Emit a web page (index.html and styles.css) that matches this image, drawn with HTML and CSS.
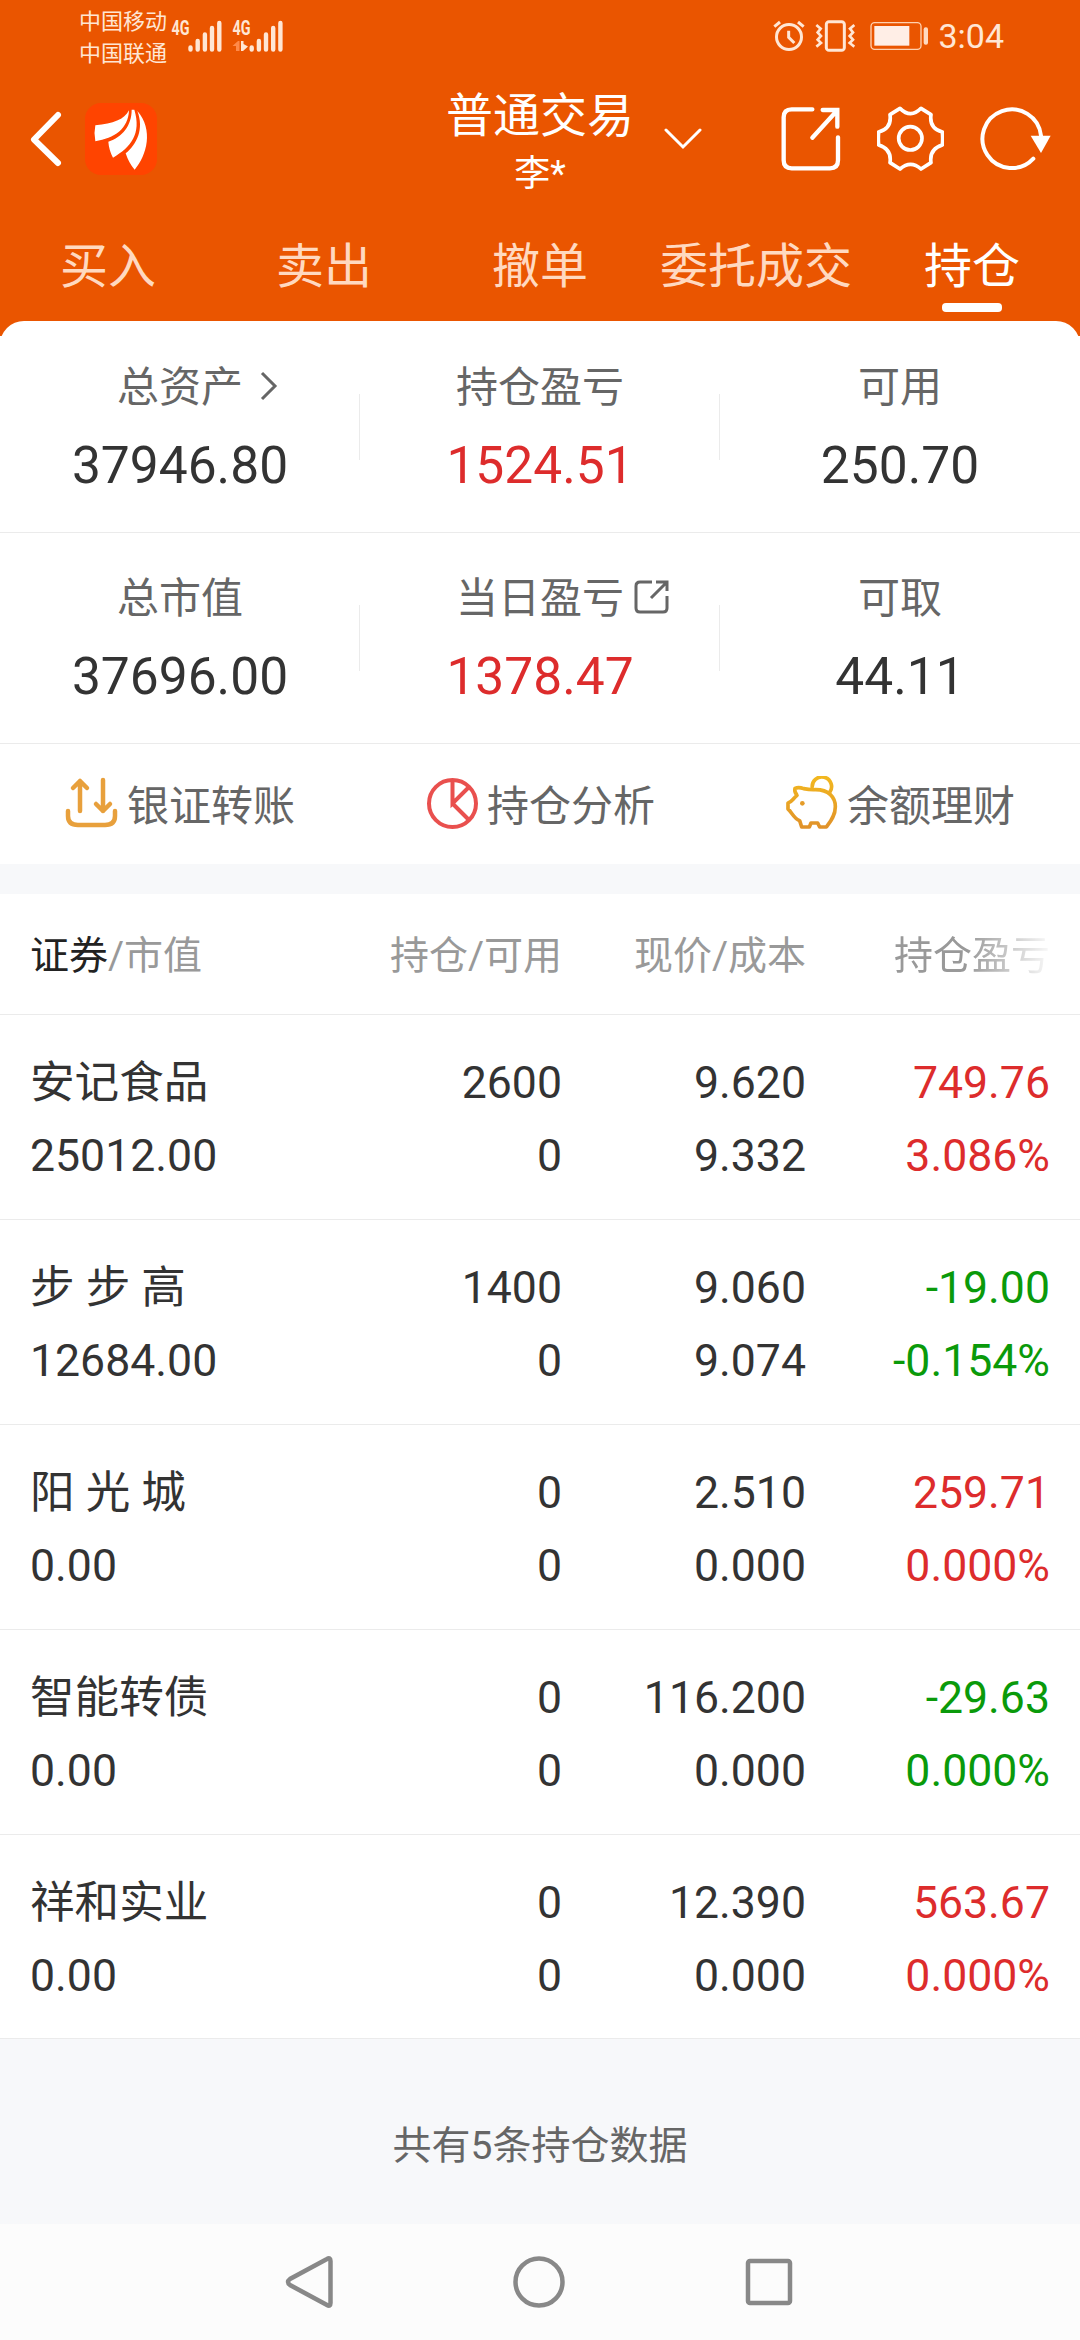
FILE: index.html
```html
<!DOCTYPE html>
<html lang="zh-CN">
<head>
<meta charset="UTF-8">
<meta name="viewport" content="width=device-width, initial-scale=1.0">
<title>普通交易</title>
<link rel="stylesheet" href="styles.css">
</head>
<body>

<header class="header">
    <div class="status">
        <div class="carriers">
            <span>中国移动</span>
            <span>中国联通</span>
        </div>
        <svg class="signals" width="120" height="46" viewBox="169 10 120 46">
            <text x="171.500" y="35" textLength="18" lengthAdjust="spacingAndGlyphs">4G</text>
            <path class="bars" d="M190.500 47.500V49.500M197.700 41V49.500M204.900 34.500V49.500M212 28V49.500M219.300 23V49.500"/>
            <text x="232.500" y="35" textLength="18" lengthAdjust="spacingAndGlyphs">4G</text>
            <path class="bars" d="M251.700 47.500V49.500M258.900 41V49.500M266 34.500V49.500M273.200 28V49.500M280.400 23V49.500"/>
            <path class="arrow-up" d="M236 51V46H232.500L238 41H239.500V51Z"/>
            <path class="arrow-down" d="M241 41H243.500V44L248 46.500L243 51H241Z"/>
        </svg>
        <div class="status-right">
            <svg width="32" height="32" viewBox="222 60 96 96" fill="none" stroke="#ffe6d4" stroke-width="9">
                <circle cx="270" cy="111" r="37.500"/>
                <path d="M269 92V112L286 129M226 80L243 66M297 66L314 80"/>
            </svg>
            <svg width="40" height="32" viewBox="348 60 120 96" fill="none" stroke="#ffe6d4" stroke-width="9">
                <rect x="382" y="65" width="54" height="86" rx="8"/>
                <path stroke-width="8" d="M352 75L365 86L356 97L366 108L356 119L366 129L352 140M466 75L453 86L462 97L452 108L462 119L452 129L466 140"/>
            </svg>
            <svg class="battery" width="59" height="30" viewBox="512 65 177 90">
                <rect x="515" y="70" width="150" height="80" rx="11" fill="none" stroke="#ffd0ae" stroke-width="4"/>
                <rect x="525" y="80" width="105" height="59" fill="#ffeee6"/>
                <rect x="673" y="84" width="13" height="52" rx="6" fill="#ffd9c0"/>
            </svg>
            <span class="time">3:04</span>
        </div>
    </div>

    <div class="bar">
        <div class="bar-left">
            <svg width="32" height="56" viewBox="0 0 32 56" fill="none" stroke="#fff" stroke-width="6" stroke-linecap="round" stroke-linejoin="round">
                <path d="M28 4L4 28.500L28 52"/>
            </svg>
            <svg class="logo" width="72" height="72" viewBox="0 0 216 216">
                <path d="M132 22C118 50 85 62 31 67Q26 90 31 115C88 106 130 78 132 22Z"/>
                <path d="M140 20C140 68 112 102 70 116Q72 142 84 164C138 132 170 92 148 20Z"/>
                <path d="M157 24C178 78 155 125 122 151Q132 182 149 200C186 156 206 80 157 24Z"/>
            </svg>
        </div>
        <div class="title">
            <h1>普通交易</h1>
            <p>李*</p>
        </div>
        <div class="bar-right">
            <svg class="caret" width="38" height="22" viewBox="0 0 38 22" fill="none" stroke="#fff" stroke-width="3" stroke-linecap="round">
                <path d="M2 2L19 19L36 2"/>
            </svg>
            <svg width="60" height="65" viewBox="240 320 180 195" fill="none" stroke="#fff" stroke-width="13" stroke-linecap="round">
                <path d="M334 330H272Q248 330 248 354V483Q248 507 272 507H387Q411 507 411 483V414"/>
                <path d="M365 332H409V382M334 415L407 335"/>
            </svg>
            <svg width="67" height="65" viewBox="531 319 201 195" fill="none" stroke="#fff" stroke-width="11" stroke-linejoin="round">
                <path d="M600 326Q632 358 663 326L693 345Q687 386 727 397Q729 416 727 436Q687 448 693 489L663 508Q632 480 600 508L570 489Q576 448 536 436Q534 416 536 397Q576 386 570 345Z"/>
                <circle cx="631" cy="416" r="35"/>
            </svg>
            <svg width="71" height="65" viewBox="838 319 213 195" fill="none" stroke="#fff" stroke-width="12" stroke-linecap="round">
                <path d="M1021 408A88 88 0 1 0 998 477"/>
                <path fill="#fff" stroke="none" d="M990 408H1050L1021 460Z"/>
            </svg>
        </div>
    </div>

    <nav class="tabs">
        <a>买入</a>
        <a>卖出</a>
        <a>撤单</a>
        <a>委托成交</a>
        <a class="active">持仓</a>
    </nav>
</header>

<section class="summary">
    <div class="summary-row">
        <div class="cell">
            <div class="label">总资产
                <svg class="more" width="18" height="30" viewBox="0 0 18 30" fill="none" stroke="#666" stroke-width="3"><path d="M2 2L15 15L2 28"/></svg>
            </div>
            <div class="value">37946.80</div>
        </div>
        <div class="cell">
            <div class="label">持仓盈亏</div>
            <div class="value red">1524.51</div>
        </div>
        <div class="cell">
            <div class="label">可用</div>
            <div class="value">250.70</div>
        </div>
    </div>
    <div class="summary-row">
        <div class="cell">
            <div class="label">总市值</div>
            <div class="value">37696.00</div>
        </div>
        <div class="cell">
            <div class="label">当日盈亏
                <svg class="open" width="35" height="34" viewBox="0 0 35 34" fill="none" stroke="#666" stroke-width="3">
                    <path d="M18 2H6Q2 2 2 6V28Q2 32 6 32H29Q33 32 33 28V16M22 2H33V11M17 18L32 3"/>
                </svg>
            </div>
            <div class="value red">1378.47</div>
        </div>
        <div class="cell">
            <div class="label">可取</div>
            <div class="value">44.11</div>
        </div>
    </div>
    <div class="actions">
        <a>
            <svg width="54" height="54" viewBox="65 776 54 54" fill="none" stroke="#e8a03c" stroke-width="4.500" stroke-linecap="round" stroke-linejoin="round">
                <path d="M68 811V816Q68 825 78 825H105Q115 825 115 816V811M80 811V781M73 788L80 781L87 788M103 780V811M96 804L103 811L110 804"/>
            </svg>
            银证转账
        </a>
        <a>
            <svg width="54" height="54" viewBox="424 776 54 54" fill="none" stroke="#e9504e" stroke-width="4">
                <circle cx="451.500" cy="803.500" r="23.500"/>
                <path d="M451.500 780V803.500L468 787M451.500 803.500L468 820"/>
            </svg>
            持仓分析
        </a>
        <a>
            <svg width="54" height="54" viewBox="253 50 162 162" fill="none" stroke="url(#gold)" stroke-width="11" stroke-linejoin="round">
                <defs>
                    <linearGradient id="gold" gradientUnits="userSpaceOnUse" x1="0" y1="55" x2="0" y2="208">
                        <stop offset="0" stop-color="#f2b71f"/>
                        <stop offset="1" stop-color="#e0912a"/>
                    </linearGradient>
                </defs>
                <path d="M283 87Q294 82 309 88Q328 92 345 91C384 91 404 114 404 142C404 170 388 188 377 203H357L351 191H331L326 203H303L297 184C280 178 273 158 262 149V131C273 128 276 119 289 108Q280 98 283 87Z"/>
                <path d="M335 86A29 29 0 1 1 387 99"/>
                <circle cx="305" cy="132" r="7" fill="#e59c28" stroke="none"/>
            </svg>
            余额理财
        </a>
    </div>
</section>

<section class="holdings">
    <div class="row head">
        <div><b>证券</b>/市值</div>
        <div>持仓/可用</div>
        <div>现价/成本</div>
        <div class="fade">持仓盈亏</div>
    </div>
    <div class="row">
        <div>安记食品<br>25012.00</div>
        <div>2600<br>0</div>
        <div>9.620<br>9.332</div>
        <div class="red">749.76<br>3.086%</div>
    </div>
    <div class="row">
        <div>步 步 高<br>12684.00</div>
        <div>1400<br>0</div>
        <div>9.060<br>9.074</div>
        <div class="green">-19.00<br>-0.154%</div>
    </div>
    <div class="row">
        <div>阳 光 城<br>0.00</div>
        <div>0<br>0</div>
        <div>2.510<br>0.000</div>
        <div class="red">259.71<br>0.000%</div>
    </div>
    <div class="row">
        <div>智能转债<br>0.00</div>
        <div>0<br>0</div>
        <div>116.200<br>0.000</div>
        <div class="green">-29.63<br>0.000%</div>
    </div>
    <div class="row">
        <div>祥和实业<br>0.00</div>
        <div>0<br>0</div>
        <div>12.390<br>0.000</div>
        <div class="red">563.67<br>0.000%</div>
    </div>
</section>

<footer class="total">共有5条持仓数据</footer>

<div class="navbar">
    <svg width="54" height="54" viewBox="0 0 54 54"><path d="M45 4Q48.500 2 48.500 6V48Q48.500 52 45 50L8 30Q4 27 8 24Z"/></svg>
    <svg width="54" height="54" viewBox="0 0 54 54"><circle cx="27" cy="27" r="23.500"/></svg>
    <svg width="54" height="54" viewBox="0 0 54 54"><rect x="6" y="6" width="42" height="42" rx="2"/></svg>
</div>

</body>
</html>
```
FILE: styles.css
```css
* {
    box-sizing: border-box;
}
body {
    margin: 0;
    width: 1080px;
    background-color: #fff;
    color: #333;
    font-family: Roboto, 'Noto Sans CJK SC', sans-serif;
}
svg {
    display: block;
    flex: none;
}
.red {
    color: #dd2c2c;
}
.green {
    color: #0a9a0a;
}

/* header */
.header {
    height: 336px;
    background-color: #ea5500;
    color: #fff;
}
.status {
    display: flex;
    align-items: flex-start;
    height: 75px;
    padding: 5px 76px 0 79px;
    color: #ffe6d4;
}
.carriers {
    display: flex;
    flex-direction: column;
    width: 90px;
    padding-top: 1px;
    font-size: 22px;
    line-height: 32px;
}
.signals {
    margin-top: 5px;
    fill: #ffe6d4;
    font-size: 21px;
    font-weight: 700;
}
.bars {
    stroke: #ffe6d4;
    stroke-width: 4.4;
    stroke-linecap: round;
}
.arrow-up {
    fill: #ff8a4a;
}
.status-right {
    display: flex;
    align-items: center;
    margin: 14px 0 0 auto;
    height: 34px;
}
.status-right svg {
    margin-right: 10px;
}
.status-right .battery {
    margin: 0 9px 0 5px;
}
.time {
    font-size: 34px;
    line-height: 34px;
}
.bar {
    display: grid;
    grid-template-columns: 1fr 192px 1fr;
    height: 129px;
}
.bar-left {
    display: flex;
    align-items: center;
    padding: 0 0 2px 30px;
}
.logo {
    margin-left: 23px;
    border-radius: 16px;
    background-color: #ff4400;
    fill: #fff;
}
.title {
    padding-top: 12px;
    text-align: center;
}
.title h1 {
    margin: 0;
    font-size: 47px;
    font-weight: 400;
    line-height: 58px;
}
.title p {
    margin: 0;
    font-size: 36px;
    line-height: 58px;
}
.bar-right {
    display: flex;
    align-items: center;
    gap: 36px;
    padding: 0 29px 2px 28px;
}
.caret {
    margin-right: auto;
}
.tabs {
    display: flex;
    height: 117px;
}
.tabs a {
    display: flex;
    flex-direction: column;
    align-items: center;
    width: 216px;
    padding-top: 25px;
    font-size: 48px;
    line-height: 76px;
    color: #ffd9c0;
}
.tabs .active {
    color: #fff;
}
.tabs .active::after {
    content: '';
    width: 60px;
    height: 9px;
    margin-top: -2px;
    border-radius: 4px;
    background-color: #fff;
}

/* account summary */
.summary {
    margin-top: -15px;
    border-radius: 24px 24px 0 0;
    background-color: #fff;
}
.summary-row {
    display: flex;
    height: 211px;
    border-bottom: 1px solid #ebebeb;
}
.summary-row:first-child {
    height: 212px;
    padding-top: 1px;
}
.cell {
    width: 360px;
    padding-top: 36px;
    text-align: center;
    background: linear-gradient(#ebebeb, #ebebeb) no-repeat right 72px / 1px 66px;
}
.summary-row .cell:last-child {
    background: none;
}
.label {
    position: relative;
    width: max-content;
    margin: 0 auto;
    font-size: 42px;
    line-height: 60px;
    color: #666;
}
/* icons hang outside the centered label */
.more {
    position: absolute;
    left: 143px;
    top: 13px;
}
.open {
    position: absolute;
    left: 178px;
    top: 11px;
}
.value {
    font-size: 51.5px;
    line-height: 96px;
}
.actions {
    display: flex;
    height: 120px;
    padding-bottom: 3px;
}
.actions a {
    display: flex;
    justify-content: center;
    align-items: center;
    gap: 8px;
    width: 360px;
    font-size: 42px;
    color: #666;
}

/* holdings */
.holdings {
    border-top: 30px solid #f7f8fa;
}
.row {
    display: grid;
    grid-template-columns: 288px 244px 244px 244px;
    height: 205px;
    padding: 32px 30px 0;
    border-bottom: 1px solid #ebebeb;
    font-size: 44.6px;
    line-height: 73px;
    text-align: right;
    white-space: nowrap;
}
.row div:first-child {
    text-align: left;
}
.row:last-child {
    height: 204px;
}
.head {
    height: 121px;
    padding-top: 26px;
    font-size: 39px;
    color: #999;
}
.head b {
    font-weight: 400;
    color: #222;
}
.fade {
    -webkit-mask-image: linear-gradient(to right, #000 66%, transparent 102%);
    mask-image: linear-gradient(to right, #000 66%, transparent 102%);
}

.total {
    height: 185px;
    padding-top: 75px;
    background-color: #f7f8fa;
    color: #666;
    font-size: 39px;
    line-height: 64px;
    text-align: center;
}
.navbar {
    display: flex;
    justify-content: space-between;
    align-items: center;
    height: 116px;
    padding: 0 284px 0 282px;
    background-color: #fcfcfc;
}
.navbar svg {
    fill: none;
    stroke: #888;
    stroke-width: 4.5;
}
```
